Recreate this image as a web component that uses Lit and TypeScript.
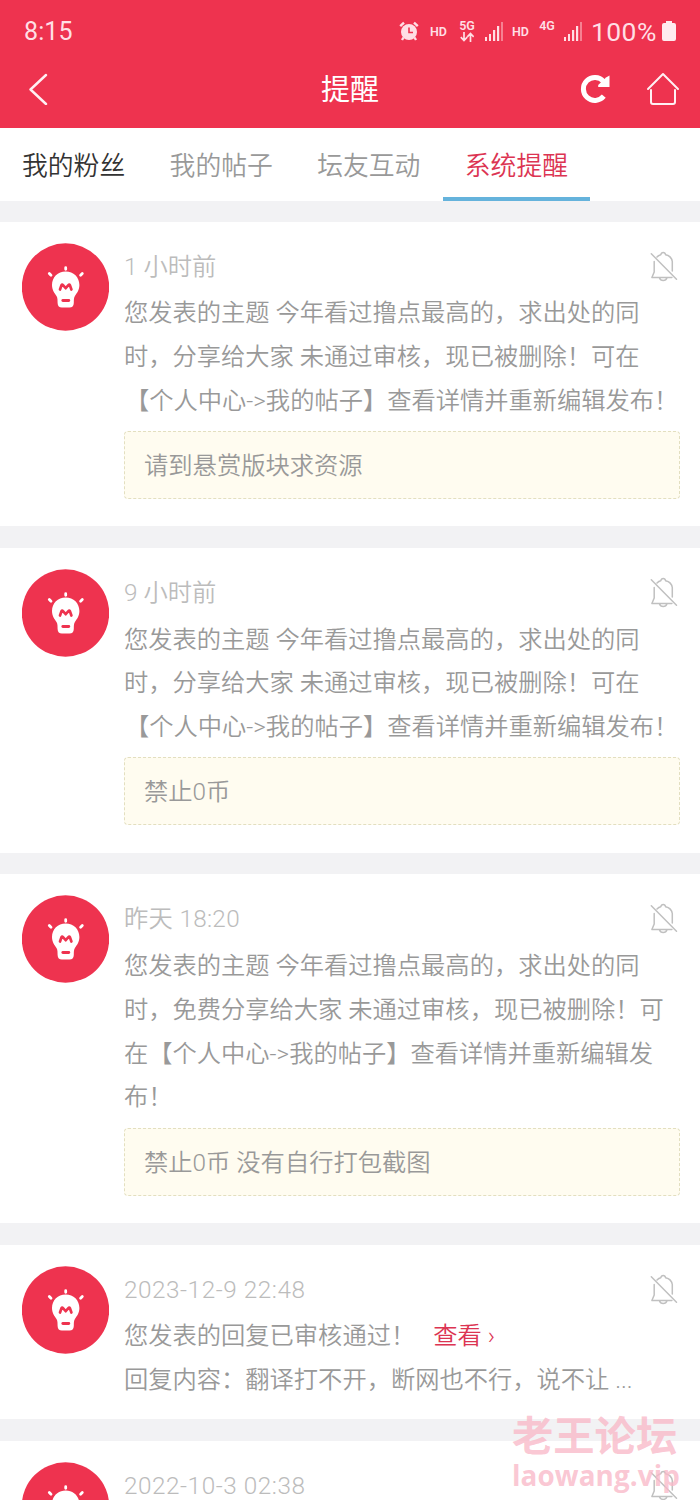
import { LitElement, html, css, svg, nothing } from "lit";
import { customElement, property } from "lit/decorators.js";

interface Notice {
  time: string;
  lines: string[];
  note?: string;
  link?: string;
}

const NOTICES: Notice[] = [
  {
    time: "1 小时前",
    lines: [
      "您发表的主题 今年看过撸点最高的，求出处的同",
      "时，分享给大家 未通过审核，现已被删除！可在",
      "【个人中心->我的帖子】查看详情并重新编辑发布！",
    ],
    note: "请到悬赏版块求资源",
  },
  {
    time: "9 小时前",
    lines: [
      "您发表的主题 今年看过撸点最高的，求出处的同",
      "时，分享给大家 未通过审核，现已被删除！可在",
      "【个人中心->我的帖子】查看详情并重新编辑发布！",
    ],
    note: "禁止0币",
  },
  {
    time: "昨天 18:20",
    lines: [
      "您发表的主题 今年看过撸点最高的，求出处的同",
      "时，免费分享给大家 未通过审核，现已被删除！可",
      "在【个人中心->我的帖子】查看详情并重新编辑发",
      "布！",
    ],
    note: "禁止0币 没有自行打包截图",
  },
  {
    time: "2023-12-9 22:48",
    lines: ["您发表的回复已审核通过！", "回复内容：翻译打不开，断网也不行，说不让 ..."],
    link: "查看 ›",
  },
  { time: "2022-10-3 02:38", lines: [] },
];

@customElement("status-bar")
class StatusBar extends LitElement {
  static styles = css`
    :host { display: flex; height: 62px; padding: 0 24px 0 24px; align-items: center;
      justify-content: space-between; color: #ffdfe5; font-family: Roboto, sans-serif; }
    .clock { font-size: 25px; letter-spacing: 0.1px; padding-top: 1px; }
    .tray { display: flex; align-items: center; }
    .alarm { margin-right: 11px; }
    .hd { font-size: 12.5px; font-weight: 600; width: 18px; }
    .net { display: flex; flex-direction: column; align-items: center; width: 18px; height: 24px;
      font-size: 12.5px; line-height: 13px; font-weight: 600; }
    .five { margin-left: 10px; margin-right: 9px; }
    .four { margin-left: 8px; margin-right: 8px; }
    .bars { margin-right: 9px; }
    .pct { font-size: 26.5px; letter-spacing: 0.4px; margin-right: 4px; width: 67px; white-space: nowrap; }
    svg { display: block; }
  `;
  private bars() {
    return svg`<g fill="#ffdfe5"><rect x="0" y="15" width="2" height="4"/><rect x="4" y="12" width="2" height="7"/>
      <rect x="8" y="8" width="2.2" height="11"/><rect x="12" y="4" width="2.2" height="15"/>
      <rect x="16" y="0" width="2" height="19" opacity=".45"/></g>`;
  }
  render() {
    return html`
      <span class="clock">8:15</span>
      <div class="tray">
        <svg class="alarm" width="20" height="20" viewBox="0 0 20 20" fill="none" stroke="#ffdfe5">
          <circle cx="10" cy="11" r="8" fill="#ffdfe5" stroke="none" />
          <path d="M1.2 5.2 5 1.6M18.8 5.2 15 1.6" stroke-width="2.4" />
          <path d="M4.5 16.5 3 19M15.5 16.5 17 19" stroke-width="2.4" />
          <path d="M10 6.5v5h4" stroke="#ee334f" stroke-width="1.6" />
        </svg>
        <span class="hd">HD</span>
        <div class="net five"><span>5G</span>
          <svg width="14" height="10" viewBox="0 0 14 10" fill="none" stroke="#ffdfe5" stroke-width="1.7">
            <path d="M4 0v8M.8 5.2 4 8.6l3.2-3.4M10.5 10V2M7.3 4.8l3.2-3.4 3.2 3.4" />
          </svg>
        </div>
        <svg class="bars" width="18" height="19">${this.bars()}</svg>
        <span class="hd">HD</span>
        <div class="net four"><span>4G</span></div>
        <svg class="bars" width="18" height="19">${this.bars()}</svg>
        <span class="pct">100%</span>
        <svg width="14" height="20" viewBox="0 0 14 20" fill="#ffebef">
          <path d="M4 0h6v2h2q2 0 2 2v14q0 2-2 2H2q-2 0-2-2V4q0-2 2-2h2z" />
        </svg>
      </div>`;
  }
}

@customElement("title-bar")
class TitleBar extends LitElement {
  static styles = css`
    :host { display: grid; grid-template-columns: 1fr auto 1fr; align-items: center; height: 53px;
      padding: 0 20px 0 28px; margin-bottom: 13px; color: #fff; }
    .title { font-size: 29px; line-height: 40px; margin-left: -8px; padding-top: 2px; }
    .tools { display: flex; justify-content: flex-end; align-items: center; gap: 36px; }
    svg { display: block; }
  `;
  render() {
    return html`
      <svg width="20" height="32" viewBox="0 0 20 32" fill="none" stroke="#fff0f3" stroke-width="2.4" stroke-linecap="round" stroke-linejoin="round">
        <path d="M18 2 2.5 16.5 18 31" />
      </svg>
      <span class="title">提醒</span>
      <div class="tools">
        <svg width="30" height="30" viewBox="0 0 30 30" fill="none">
          <path d="M23.8 22.2A11.5 11.5 0 1 1 23.5 7.3" stroke="#fff" stroke-width="5" />
          <path d="M29.5 1.500V13H18.200V11L26 3.500z" fill="#fff" />
        </svg>
        <svg width="34" height="34" viewBox="0 0 34 34" fill="none" stroke="#fff0f3" stroke-width="2" stroke-linecap="round" stroke-linejoin="round">
          <path d="M2 17 17 2 32 17M5 18v12q0 2 2 2h20q2 0 2-2V18" />
        </svg>
      </div>`;
  }
}

@customElement("notice-card")
class NoticeCard extends LitElement {
  @property({ attribute: false }) notice!: Notice;
  static styles = css`
    :host { display: flex; gap: 15px; padding: 21px 20px 0 22px; background: #fff; }
    .avatar { flex: none; display: block; }
    .body { flex: 1; min-width: 0; padding-bottom: 17.3px; }
    .head { display: flex; justify-content: space-between; height: 48.7px; }
    .time { color: #bcbcbc; font-size: 24.3px; line-height: 47px; white-space: pre; }
    .clock { letter-spacing: 0.3px; }
    .date { letter-spacing: 0.55px; }
    .bell { margin: 8px 2px 0 0; }
    .line { font-size: 24.27px; line-height: 43.7px; white-space: pre; color: #999; }
    .bracket { padding-left: 1px; }
    .link { color: #dc3452; margin-left: 18px; }
    .note { box-sizing: border-box; height: 68px; margin: 8.6px 0 10px; padding: 0 19px; border: 1px dashed #e3dfc0;
      border-radius: 4px; background: #fffcf0; color: #999; font-size: 24.3px; line-height: 67px; white-space: pre; }
  `;
  private timeClass(time: string) {
    return time.startsWith("20") ? "time date" : time.includes(":") ? "time clock" : "time";
  }
  render() {
    const n = this.notice;
    return html`
      <svg class="avatar" width="87" height="88" viewBox="0 0 87 88">
        <circle cx="43.5" cy="44" r="43.7" fill="#ee334f" />
        <g stroke="#fff" stroke-width="2.8" stroke-linecap="round">
          <path d="M43.7 24.7v1.6M27.3 30.5l1.7 1.7M60.3 30.5l-1.7 1.7" />
        </g>
        <path fill="#fff" d="M43.7 28.5C35.8 28.5 30 34.3 30 42c0 5.2 2.7 8.2 4.5 11 1.2 2 1 4 1.1 7 .1 3 1.6 4.5 4.3 4.5h7.6c2.7 0 4.2-1.5 4.3-4.5.1-3-.1-5 1.1-7 1.8-2.8 4.5-5.8 4.5-11 0-7.7-5.8-13.5-13.7-13.5z" />
        <path d="M38 46.5l1.5-4.3q.6-1 1.5 0l2.7 3 2.7-3q.9-1 1.5 0l1.5 4.3" fill="none" stroke="#ee334f" stroke-width="2.7" stroke-linecap="round" stroke-linejoin="round" />
        <path d="M40.8 57.5h6" stroke="#ee334f" stroke-width="2.8" stroke-linecap="round" />
      </svg>
      <div class="body">
        <div class="head">
          <span class=${this.timeClass(n.time)}>${n.time}</span>
          <svg class="bell" width="28" height="31" viewBox="0 0 28 31" fill="none" stroke="#c0c0c0" stroke-width="1.5" stroke-linecap="round" stroke-linejoin="round">
            <path d="M1.3 2.8 26.5 28.3M7 6Q8.8 4 10.8 3.7q.4-2.3 2.4-2.3t2.4 2.3Q21.5 5 22.3 10.5V20M4.2 10.5V21L1.9 26.5h20M9.5 27q.8 2.4 3.7 2.4t3.7-2.4" />
          </svg>
        </div>
        ${n.lines.map(
          (l, i) => html`<div class="line ${l.startsWith("【") ? "bracket" : ""}">${l}${i === 0 && n.link ? html`<span class="link">${n.link}</span>` : nothing}</div>`
        )}
        ${n.note ? html`<div class="note">${n.note}</div>` : nothing}
      </div>`;
  }
}

@customElement("app-root")
class AppRoot extends LitElement {
  static styles = css`
    :host { display: block; position: relative; height: 1500px; overflow: hidden; background: #f2f2f4;
      font-family: Roboto, "Noto Sans CJK SC", sans-serif; font-weight: 350; text-spacing-trim: space-all; }
    .top { background: #ee334f; height: 128px; font-weight: 400; }
    .tabs { display: flex; height: 73px; background: #fff; margin-bottom: 20.5px; }
    .tab { box-sizing: border-box; width: 147.6px; padding: 1px 0 0 22px; font-size: 25.8px; line-height: 74px;
      height: 73px; color: #999; white-space: nowrap; }
    .dark { color: #333; }
    .active { color: #dc3452; box-shadow: inset 0 -4px #65b3dc; }
    .list { display: flex; flex-direction: column; gap: 21.8px; }
    .mark { position: absolute; left: 512px; top: 1409px; color: rgba(249, 185, 200, 0.8);
      font-family: "Open Sans", "Noto Sans CJK SC", sans-serif; font-weight: 700; white-space: nowrap; }
    .zh { font-size: 41.3px; line-height: 52px; }
    .url { font-size: 27.8px; line-height: 28px; letter-spacing: 0.1px; }
  `;
  render() {
    return html`
      <div class="top"><status-bar></status-bar><title-bar></title-bar></div>
      <nav class="tabs">
        <span class="tab dark">我的粉丝</span>
        <span class="tab">我的帖子</span>
        <span class="tab">坛友互动</span>
        <span class="tab active">系统提醒</span>
      </nav>
      <main class="list">${NOTICES.map((n) => html`<notice-card .notice=${n}></notice-card>`)}</main>
      <div class="mark">
        <div class="zh">老王论坛</div>
        <div class="url">laowang.vip</div>
      </div>`;
  }
}
